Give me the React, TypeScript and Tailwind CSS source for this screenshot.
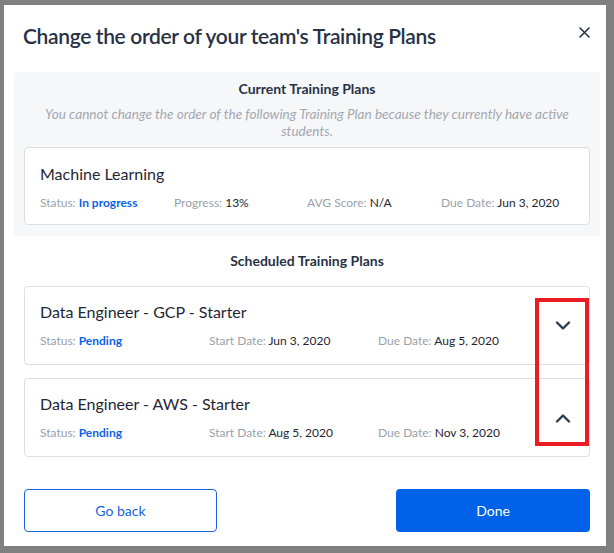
import React from "react";

const font = { fontFamily: "Lato, 'Noto Sans', sans-serif" };

function Field({ label, value, blue, className }: { label: string; value: string; blue?: boolean; className?: string }) {
  return (
    <div className={"text-[12px] leading-[16px] whitespace-nowrap " + (className ?? "")}>
      <span className="text-[#9aa1ab]">{label} </span>
      <span className={blue ? "text-[#0a63e8] font-bold" : "text-[#1f2633]"}>{value}</span>
    </div>
  );
}

function Chevron({ up }: { up?: boolean }) {
  return (
    <svg width="16" height="10" viewBox="0 0 16 10" fill="none">
      {up ? (
        <path d="M2 8.5 L8 2.5 L14 8.5" stroke="#2d3a4f" strokeWidth="2.4" strokeLinecap="round" strokeLinejoin="round" />
      ) : (
        <path d="M2 1.5 L8 7.5 L14 1.5" stroke="#2d3a4f" strokeWidth="2.4" strokeLinecap="round" strokeLinejoin="round" />
      )}
    </svg>
  );
}

function ScheduledCard({ title, start, due, up }: { title: string; start: string; due: string; up?: boolean }) {
  return (
    <div className="h-[79px] border border-[#dcdfe4] rounded-[4px] bg-white flex items-center">
      <div className="flex-1 pl-[15px] pt-[15px] pb-[14px] self-start">
        <div className="text-[16px] leading-[20px] text-[#1f2633]">{title}</div>
        <div className="flex mt-[11px]">
          <Field className="w-[169px]" label="Status:" value="Pending" blue />
          <Field className="w-[169px]" label="Start Date:" value={start} />
          <Field label="Due Date:" value={due} />
        </div>
      </div>
      <div className="w-[52px] flex justify-center pr-[1px]">
        <Chevron up={up} />
      </div>
    </div>
  );
}

export default function App() {
  return (
    <div className="w-[614px] h-[553px] bg-[#808080] pl-[4px] pt-[5px] pr-[8px] pb-[7px]" style={font}>
      <div className="w-full h-full bg-white relative">
        <div className="flex items-center justify-between h-[67px] pl-[19px] pr-[16px] pb-[6px]">
          <h1 className="text-[21px] font-semibold text-[#283246] tracking-[-0.35px]">
            Change the order of your team's Training Plans
          </h1>
          <svg width="11" height="11" viewBox="0 0 11 11" className="mb-[6px]">
            <path d="M1 1 L10 10 M10 1 L1 10" stroke="#283246" strokeWidth="1.6" strokeLinecap="round" />
          </svg>
        </div>

        <div className="ml-[10px] w-[586px] bg-[#f6f7f9] rounded-[4px] pt-[7px] pb-[11px] px-[10px]">
          <div className="text-center text-[14px] leading-[20px] font-bold text-[#283246]">Current Training Plans</div>
          <div className="text-center italic text-[13.6px] leading-[17px] text-[#a3a8b0] mt-[7px] px-[4px]">
            You cannot change the order of the following Training Plan because they currently have active students.
          </div>
          <div className="mt-[7px] h-[78px] border border-[#dcdfe4] rounded-[4px] bg-white pl-[15px] pt-[16px]">
            <div className="text-[16px] leading-[20px] text-[#1f2633]">Machine Learning</div>
            <div className="flex mt-[11px]">
              <Field className="w-[134px]" label="Status:" value="In progress" blue />
              <Field className="w-[133px]" label="Progress:" value="13%" />
              <Field className="w-[134px]" label="AVG Score:" value="N/A" />
              <Field label="Due Date:" value="Jun 3, 2020" />
            </div>
          </div>
        </div>

        <div className="text-center text-[14px] leading-[20px] font-bold text-[#283246] mt-[15px] ml-[10px] w-[586px]">
          Scheduled Training Plans
        </div>

        <div className="ml-[20px] w-[566px] mt-[15px] flex flex-col gap-[13px]">
          <ScheduledCard title="Data Engineer - GCP - Starter" start="Jun 3, 2020" due="Aug 5, 2020" />
          <ScheduledCard title="Data Engineer - AWS - Starter" start="Aug 5, 2020" due="Nov 3, 2020" up />
        </div>

        <div className="ml-[20px] w-[566px] mt-[32px] flex justify-between">
          <button className="w-[193px] h-[43px] border border-[#1763df] rounded-[4px] text-[14px] text-[#1763df] bg-white">
            Go back
          </button>
          <button className="w-[194px] h-[43px] rounded-[4px] text-[14px] text-white bg-[#0062e9]">Done</button>
        </div>

        <div className="absolute left-[531px] top-[293px] w-[54px] h-[148px] border-[4px] border-[#ec1c24]" />
      </div>
    </div>
  );
}
